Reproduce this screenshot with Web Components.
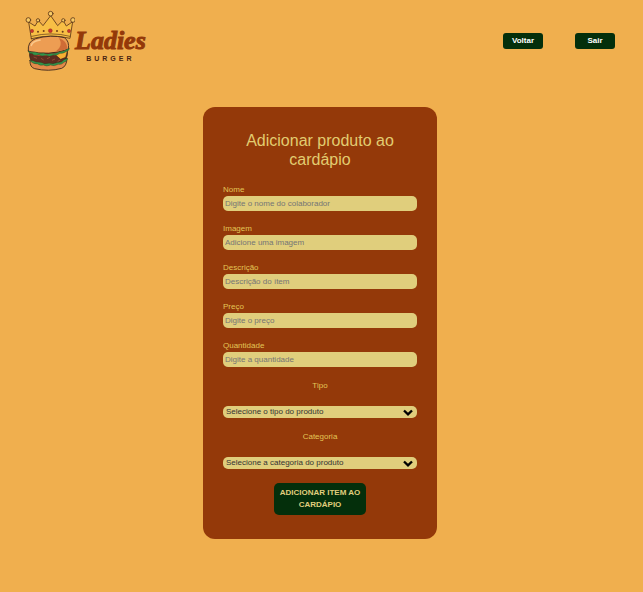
<!DOCTYPE html>
<html lang="pt-BR">
<head>
<meta charset="utf-8">
<meta name="viewport" content="width=device-width, initial-scale=1">
<title>Ladies Burger</title>
<style>
html{--page:#f0af4e;--card:#943909;--sand:#e0ce7c;--green:#042f0b;--label:#e3c556}
body{margin:0;background:var(--page);font-family:"Liberation Sans",Arial,sans-serif;font-size:8px}
main{display:flex;justify-content:center;padding:24px 12px 48px 9px}
</style>
</head>
<body>
<site-header>
  <nav-button>Voltar</nav-button>
  <nav-button>Sair</nav-button>
</site-header>
<main>
  <product-card>
    <span slot="title">Adicionar produto ao cardápio</span>
    <text-field label="Nome" hint="Digite o nome do colaborador"></text-field>
    <text-field label="Imagem" hint="Adicione uma imagem"></text-field>
    <text-field label="Descrição" hint="Descrição do ítem"></text-field>
    <text-field label="Preço" hint="Digite o preço"></text-field>
    <text-field label="Quantidade" hint="Digite a quantidade"></text-field>
    <select-field label="Tipo" hint="Selecione o tipo do produto"></select-field>
    <select-field label="Categoria" hint="Selecione a categoria do produto"></select-field>
    <submit-button slot="action">ADICIONAR ITEM AO CARDÁPIO</submit-button>
  </product-card>
</main>
<script>
const define = (name, render) => customElements.define(name, class extends HTMLElement {
  constructor() {
    super();
    this.attachShadow({ mode: 'open' }).innerHTML = render(this);
  }
});

define('brand-logo', () => `
<style>
:host{display:flex;align-items:center}
svg{display:block;width:50px;height:70px;flex:none}
.words{display:grid;justify-items:center;padding-top:8px}
.name{font:italic 900 26px/28px "Liberation Serif","Times New Roman",serif;color:#943909;-webkit-text-stroke:1px #943909}
.sub{font:bold 7px/8px "Liberation Sans",Arial,sans-serif;letter-spacing:3px;color:#4a2513}
</style>
<svg viewBox="17 3 150 210" aria-hidden="true">
  <g stroke="#5b3517" stroke-width="2.5" stroke-linejoin="round" stroke-linecap="round">
    <path d="M36 101L28 51L47 63L57 46L71 62L94 32L115 62L131 46L141 63L160 50L152 100Q96 86 36 101Z" fill="#f8bf45"/>
    <g fill="#f8cb65"><circle cx="94" cy="26" r="7"/><circle cx="56" cy="46" r="5"/><circle cx="132" cy="46" r="5"/><circle cx="27" cy="45" r="7"/><circle cx="161" cy="45" r="7"/></g>
    <path d="M37 94Q96 79 152 94" fill="none" stroke-width="2"/>
  </g>
  <g stroke="#352018" stroke-width="2.5" stroke-linejoin="round">
    <path d="M32 165Q31 187 46 191Q88 201 127 190Q142 184 143 160Z" fill="#e28a49"/>
    <path d="M31 145Q29 166 45 173Q91 183 131 169Q146 161 144 138Z" fill="#5e2d20"/>
    <path d="M27 139Q24 109 49 101Q94 88 135 98Q151 108 147 133Q88 153 27 139Z" fill="#ed9d53"/>
    <path d="M119 99Q143 107 144 131Q128 137 110 139Q133 122 119 99Z" fill="#cf6c36" stroke="none"/>
    <path d="M36 121Q40 108 62 105" fill="none" stroke="#fac88b" stroke-width="5" stroke-linecap="round"/>
    <path d="M43 144Q91 153 139 135L138 144Q91 158 43 151Z" fill="#d8432c" stroke="none"/>
    <path d="M96 150L145 134L139 157L124 163L110 151Z" fill="#f8af31" stroke-width="1.5"/>
    <path d="M26 137Q37 143 48 141Q61 147 72 144Q84 149 96 145Q110 146 121 140Q137 139 150 129Q151 137 140 140Q132 146 122 145Q112 153 102 150Q90 157 80 151Q68 156 58 149Q45 154 39 146Q29 147 26 137Z" fill="#319449" stroke-width="1"/>
    <path d="M30 166Q42 166 50 171Q65 170 76 176Q91 173 101 176Q116 172 126 171Q134 162 145 160Q144 169 134 172Q127 180 117 178Q104 185 94 180Q82 186 72 180Q62 183 55 177Q41 178 30 166Z" fill="#319449" stroke-width="1"/>
    <path d="M43 156L53 160M65 160L73 165M83 161L92 157M98 166L107 162M115 169L123 165" fill="none" stroke="#934a32" stroke-width="3"/>
  </g>
  <g fill="#cb302b" stroke="#73271b"><circle cx="93" cy="77" r="6"/><circle cx="38" cy="78" r="5"/><circle cx="149" cy="78" r="5"/></g>
  <g fill="#6c3c19"><circle cx="56" cy="80" r="3"/><circle cx="73" cy="78" r="3"/><circle cx="113" cy="78" r="3"/><circle cx="130" cy="80" r="3"/></g>
</svg>
<div class="words"><span class="name">Ladies</span><span class="sub">BURGER</span></div>`);

define('nav-button', () => `
<style>
:host{display:block}
button{display:block;width:40px;height:16px;padding:0;border:0;border-radius:3px;background:var(--green);color:#fff;font:bold 8px/16px "Liberation Sans",Arial,sans-serif;cursor:pointer}
</style>
<button type="button"><slot></slot></button>`);

define('site-header', () => `
<style>
:host{display:block}
header{display:flex;justify-content:space-between;align-items:center;padding:6px 28px 7px 25px}
nav{display:flex;gap:32px}
</style>
<header><brand-logo></brand-logo><nav><slot></slot></nav></header>`);

define('product-card', () => `
<style>
:host{display:block;flex:0 1 234px;min-width:0}
form{display:grid;gap:12px;padding:24px 20px;border-radius:12px;background:var(--card)}
h1{margin:0 0 3px;font-size:16px;line-height:19px;font-weight:400;text-align:center;color:#e2cc70}
.action{display:grid;justify-items:center;padding-top:2px}
</style>
<form>
  <h1><slot name="title"></slot></h1>
  <slot></slot>
  <div class="action"><slot name="action"></slot></div>
</form>`);

define('text-field', el => `
<style>
:host{display:grid;gap:1px}
label{line-height:11px;color:var(--label)}
input{box-sizing:border-box;width:100%;height:15px;padding:0 2px;border:0;border-radius:5px;background:var(--sand);color:#333;font:8px "Liberation Sans",Arial,sans-serif}
input::placeholder{color:#757575;opacity:1}
</style>
<label for="field">${el.getAttribute('label')}</label>
<input id="field" type="text" placeholder="${el.getAttribute('hint')}">`);

define('select-field', el => `
<style>
:host{display:grid;gap:15px;padding-top:1px}
label{line-height:11px;color:var(--label);text-align:center}
.box{display:grid;align-items:center}
.box>*{grid-area:1/1}
select{appearance:none;width:100%;height:12px;padding:0 16px 0 3px;border:0;border-radius:5px;background:var(--sand);color:#333;font:8px/12px "Liberation Sans",Arial,sans-serif}
svg{justify-self:end;width:10px;height:7px;margin-right:4px;pointer-events:none}
</style>
<label for="field">${el.getAttribute('label')}</label>
<div class="box">
  <select id="field"><option>${el.getAttribute('hint')}</option></select>
  <svg viewBox="0 0 10 7" aria-hidden="true"><path d="M1 1.5L5 5.3L9 1.5" fill="none" stroke="#000" stroke-width="2.4"/></svg>
</div>`);

define('submit-button', () => `
<style>
:host{display:block;max-width:92px}
button{display:block;width:100%;padding:4px 5px;border:0;border-radius:5px;background:var(--green);color:var(--sand);font:bold 8px/12px "Liberation Sans",Arial,sans-serif;text-align:center;cursor:pointer}
</style>
<button type="submit"><slot></slot></button>`);
</script>
</body>
</html>
